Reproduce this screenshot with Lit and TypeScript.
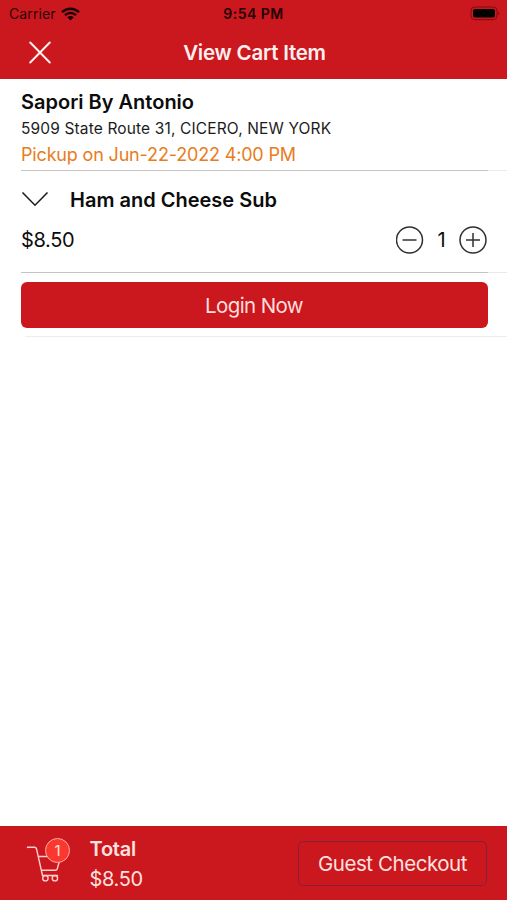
import { LitElement, html, css } from "lit";
import { customElement, state } from "lit/decorators.js";

@customElement("app-root")
export class AppRoot extends LitElement {
  @state() private quantity = 1;

  static styles = css`
    :host {
      display: flex;
      flex-direction: column;
      width: 507px;
      height: 900px;
      overflow: hidden;
      background: #fff;
      color: #0c0c0c;
      font-family: Inter, "Liberation Sans", sans-serif;
      white-space: nowrap;
    }
    * { box-sizing: border-box; }
    svg { display: block; fill: none; flex: none; }
    button {
      font: inherit;
      color: inherit;
      background: none;
      border: 0;
      padding: 0;
      margin: 0;
    }
    .top { background: #cb171e; height: 79px; flex: none; }
    .status {
      display: grid;
      grid-template-columns: 1fr auto 1fr;
      align-items: center;
      height: 27px;
      padding: 0 7px;
      font-size: 14px;
      color: #2b0507;
    }
    .carrier { display: flex; align-items: center; gap: 5px; padding-left: 2px; letter-spacing: 0.12px; }
    .time { font-weight: 600; font-size: 14px; color: #230304; letter-spacing: 0.5px; }
    .battery { justify-self: end; }
    .nav {
      display: grid;
      grid-template-columns: 81px 1fr 79px;
      align-items: center;
      height: 51px;
    }
    .nav svg { margin-left: 28px; }
    h1 {
      margin: 0;
      text-align: center;
      font-size: 20.5px;
      letter-spacing: -0.23px;
      font-weight: 600;
      color: #fff0ef;
    }
    .store { height: 91px; padding: 10px 0 0 21px; }
    h2 { margin: 0; font-size: 20px; font-weight: 600; line-height: 26px; }
    .address { font-size: 15.5px; letter-spacing: 0.14px; line-height: 28px; color: #1c1c1c; }
    .pickup { font-size: 18px; letter-spacing: -0.17px; line-height: 24px; color: #e87c20; }
    .rule { height: 1px; flex: none; background: linear-gradient(to right, transparent 21px, #c4c4c4 21px 488px, #e9e9e9 488px); }
    .store, .item { flex: none; }
    .item { height: 101px; padding: 14px 20px 0 21px; }
    .head { display: flex; align-items: center; height: 29px; gap: 21px; }
    .head svg { margin-bottom: 2px; }
    .row { display: flex; align-items: center; justify-content: space-between; height: 51px; font-size: 20px; }
    .price, .sum { letter-spacing: -0.35px; }
    .stepper { display: flex; align-items: center; }
    .count { width: 35px; text-align: center; }
    .login {
      flex: none;
      height: 46px;
      margin: 9px 19.5px 0 20.5px;
      border-radius: 6px;
      background: #cb171e;
      color: #ffdedc;
      font-size: 20.5px;
      letter-spacing: -0.62px;
    }
    .end { flex: none; height: 1px; margin: 8px 0 0 25px; background: #ebedee; }
    .spacer { flex: 1; }
    .bottom {
      flex: none;
      display: flex;
      align-items: flex-start;
      height: 74px;
      padding: 0 20px 0 26px;
      background: #cb171e;
      color: #ffe2df;
    }
    .cart { width: 63.5px; height: 74px; position: relative; padding-top: 19px; }
    .badge {
      position: absolute;
      left: 19px;
      top: 12px;
      width: 25px;
      height: 25px;
      border: 1px solid #ffaaa5;
      border-radius: 50%;
      background: #fb3830;
      font-size: 15px;
      line-height: 23px;
      text-align: center;
    }
    .total { flex: 1; padding-top: 8px; font-size: 20px; line-height: 30px; }
    .total b { display: block; font-weight: 600; letter-spacing: -0.25px; }
    .guest {
      width: 189px;
      height: 45px;
      margin-top: 15px;
      border: 1px solid #861f3b;
      border-radius: 5px;
      font-size: 20.5px;
      letter-spacing: -0.45px;
    }
  `;

  render() {
    return html`
      <header class="top">
        <div class="status">
          <span class="carrier">Carrier
            <svg width="19" height="14" viewBox="0 0 19 14">
              <path d="M1 5.2C6 .5 13 .5 18 5.2M4 8.2c3.3-3 7.7-3 11 0" stroke="#1a0203" stroke-width="2.5" />
              <path d="M6.3 10.2c2-1.7 4.4-1.7 6.4 0L9.5 13.6z" fill="#1a0203" />
            </svg>
          </span>
          <span class="time">9:54 PM</span>
          <svg class="battery" width="30" height="15" viewBox="0 0 30 15">
            <rect x="1" y="1" width="26" height="12.6" rx="3.5" stroke="#84090f" />
            <rect x="3" y="3" width="22" height="8.6" rx="2" fill="#000" />
            <path d="M28.3 5.4q2.2 1.9 0 3.8z" fill="#84090f" />
          </svg>
        </div>
        <nav class="nav">
          <svg width="24" height="24" viewBox="0 0 24 24">
            <path d="M2.2 1.5l19.6 20M21.800 1.500L2.200 21.500" stroke="#fff0ef" stroke-width="2" stroke-linecap="round" />
          </svg>
          <h1>View Cart Item</h1>
        </nav>
      </header>
      <section class="store">
        <h2>Sapori By Antonio</h2>
        <div class="address">5909 State Route 31, CICERO, NEW YORK</div>
        <div class="pickup">Pickup on Jun-22-2022 4:00 PM</div>
      </section>
      <div class="rule"></div>
      <section class="item">
        <div class="head">
          <svg width="28" height="16" viewBox="0 0 28 16">
            <path d="M1.5 1.5L14 14.2 26.5 1.5" stroke="#1c1c1c" stroke-width="1.6" />
          </svg>
          <h2 class="name">Ham and Cheese Sub</h2>
        </div>
        <div class="row">
          <span class="price">$8.50</span>
          <div class="stepper">
            <button @click=${() => (this.quantity = Math.max(1, this.quantity - 1))}>
              <svg width="28" height="28" viewBox="0 0 28 28" stroke="#303030" stroke-width="1.5">
                <circle cx="13.5" cy="14" r="13" /><path d="M6.5 14h14" />
              </svg>
            </button>
            <span class="count">${this.quantity}</span>
            <button @click=${() => this.quantity++}>
              <svg width="28" height="28" viewBox="0 0 28 28" stroke="#303030" stroke-width="1.5">
                <circle cx="14" cy="14" r="13" /><path d="M7 14h14M14 7v14" />
              </svg>
            </button>
          </div>
        </div>
      </section>
      <div class="rule"></div>
      <button class="login">Login Now</button>
      <div class="end"></div>
      <div class="spacer"></div>
      <footer class="bottom">
        <div class="cart">
          <svg width="36" height="38" viewBox="0 0 36 38" stroke="#ffd0cd" stroke-width="1.4" stroke-linecap="round" stroke-linejoin="round">
            <path d="M1.500 2.600V2.200H8.500q1.500 0 2 1.600L16.500 30.500M12.200 11.500H34M15.500 25.200H29.500q1.300 0 1.700-1.200L34 14M16.500 30.500H31.500" />
            <circle cx="19.400" cy="33.200" r="2.700" /><circle cx="28.900" cy="33.200" r="2.700" />
          </svg>
          <span class="badge">${this.quantity}</span>
        </div>
        <div class="total"><b>Total</b><span class="sum">$8.50</span></div>
        <button class="guest">Guest Checkout</button>
      </footer>
    `;
  }
}
